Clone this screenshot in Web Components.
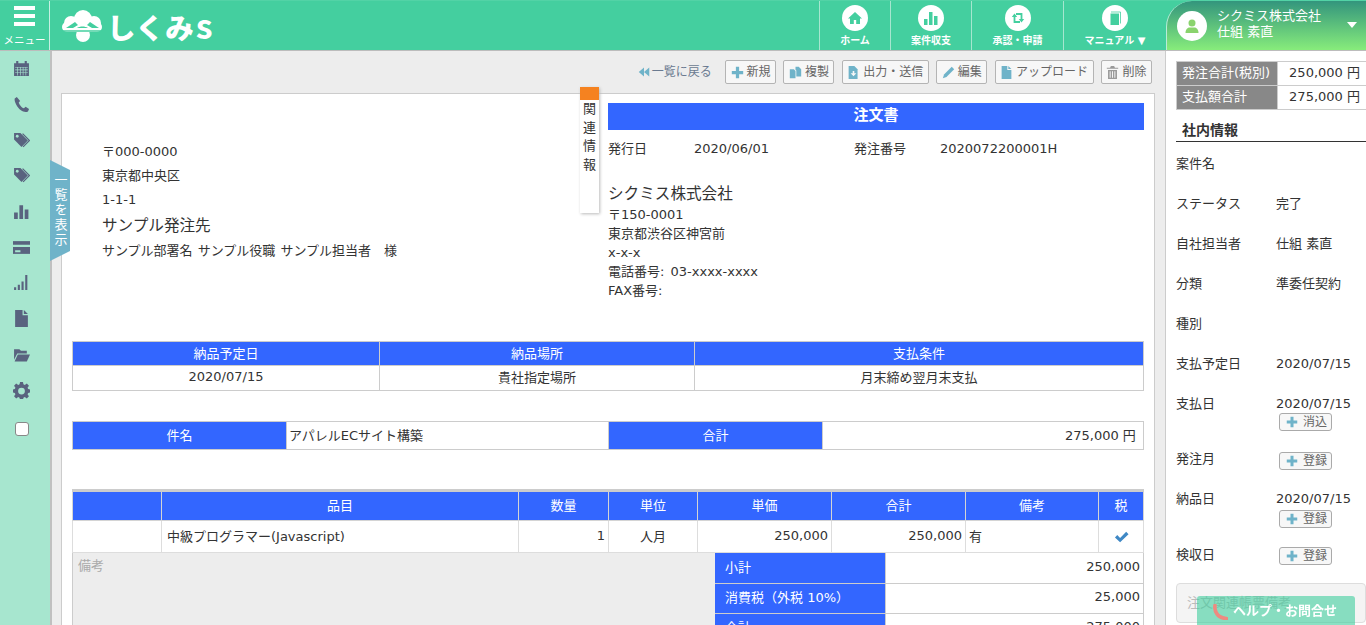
<!DOCTYPE html>
<html lang="ja">
<head>
<meta charset="utf-8">
<title>しくみs</title>
<style>
html, body { margin: 0; height: 100%; overflow: hidden; }
body { font: 13px "DejaVu Sans", "Noto Sans CJK JP", sans-serif; color: #333; }
</style>
</head>
<body>
<app-shell>
  <app-header slot="header"></app-header>
  <side-bar slot="side"></side-bar>
  <main-area slot="main"></main-area>
  <info-panel slot="info"></info-panel>
</app-shell>
<list-tab></list-tab>
<help-button></help-button>

<script>
// fill="currentColor" icons, all on a 16x16 box
const ICONS = {
    calendar: '<path d="M1 3h2V1h2v2h6V1h2v2h2v12H1z"/><path fill="#a7e6cf" d="M2 6.500h12v.6H2zM2 9h12v.6H2zM2 11.500h12v.6H2zM4 6.500h.6v8H4zM6.600 6.500h.6v8h-.6zM9.200 6.500h.6v8h-.6zM11.800 6.500h.6v8h-.6z"/>',
    phone: '<path d="M3.600 1 1.600 2.400C.9 5 4 11 7.500 13.500c2 1.400 4.600 2 6.600 1l1-2.300-3.200-2-1.600 1.300C8 10.800 5.800 7.800 5.400 6l1.300-1.300z"/>',
    handset: '<path d="M3 1.500C2 8 6 14 14.500 14.500" fill="none" stroke="currentColor" stroke-width="3.600" stroke-linecap="round"/>',
    tags: '<path d="M1 1h6l7 7-6 6-7-7z"/><path fill="none" stroke="currentColor" stroke-width="1.200" d="M9 1.500l6.500 6.500-6 6"/><circle cx="4" cy="4" r="1.300" fill="#a7e6cf"/>',
    bars: '<path d="M1 9h3.500v6H1zM6 2h3.500v13H6zM11 6h3.500v9H11z"/>',
    card: '<path d="M0 2h16v12H0z"/><path fill="#a7e6cf" d="M0 5.500h16v2H0zM2 10.500h5v2H2z"/>',
    signal: '<path d="M1 12.500h2V15H1zM4.500 10h2v5h-2zM8 7h2v8H8zM11.500 1h2v14h-2z"/>',
    file: '<path d="M2 0h7v5h5v11H2z"/><path d="M10.200 0 14 3.800h-3.800z"/>',
    folder: '<path d="M1 3h5l1.500 1.500H13V7H4L1 13z"/><path d="M4.500 8H16l-3 6.500H1.500z"/>',
    cog: '<path fill-rule="evenodd" d="M6.600 0h2.800l.4 2.200 1.300.6L13 1.500l2 2-1.300 1.900.6 1.300 2.200.4v2.800l-2.200.4-.6 1.300 1.300 1.900-2 2-1.900-1.300-1.300.6-.4 2.200H6.600l-.4-2.200-1.300-.6L3 15.500l-2-2 1.300-1.900-.6-1.300L-.5 9.900V7.100l2.200-.4.6-1.300L1 3.500l2-2 1.900 1.300 1.300-.6z M8 5.300a3.200 3.200 0 1 0 0 6.400 3.200 3.200 0 0 0 0-6.400z"/>',
    home: '<path d="M8 2 1 8.500h2V14h3.800v-4h2.400v4H13V8.500h2z"/>',
    retweet: '<path d="M4.500 5.500V12H10M11.500 10.500V4H6" fill="none" stroke="currentColor" stroke-width="1.800"/><path d="M1.800 7 4.500 3.500 7.200 7zM8.800 9l2.700 3.500L14.200 9z"/>',
    book: '<path d="M3.500 3.500h8.500V15H3.500z"/><path d="M4 2h9.500v11.500" fill="none" stroke="currentColor" stroke-width=".8"/>',
    user: '<circle cx="8" cy="5" r="3.500"/><path d="M1.500 15c0-4 2.500-5.500 4-5.500h5c1.500 0 4 1.500 4 5.500z"/>',
    plus: '<path d="M6 1h4v5h5v4h-5v5H6v-5H1V6h5z"/>',
    copy: '<path d="M1 4h5l2 2v9H1z"/><path d="M8 1h4l3 3v9H9V5.500L8 4.500z"/>',
    output: '<path d="M2 0h7l4 4v12H2z"/><path fill="#f7f7f7" d="M7 6h2v3h2.500L8 12.500 4.500 9H7z"/>',
    pencil: '<path d="M12 1l3 3-9.500 9.500-4.500 1.500 1.500-4.500z"/>',
    trash: '<path fill-rule="evenodd" d="M6 0h4l1 2h4v1.500H1V2h4zM2.500 5h11v11h-11zM4.500 6.500v8h1.200v-8zM7.400 6.500v8h1.200v-8zM10.300 6.500v8h1.200v-8z"/>',
    back: '<path d="M8 2v12L1 8zM15 2v12L8 8z"/>',
    check: '<path d="M1 9l2.500-2.500 3 3L13 3l2.500 2.500-9 8.500z"/>'
};

function icon(name, size) {
    return `<svg width="${size}" height="${size}" viewBox="0 0 16 16" fill="currentColor" aria-hidden="true">${ICONS[name]}</svg>`;
}

class AppShell extends HTMLElement {
    constructor() {
        super();
        this.attachShadow({mode: 'open'});
        this.shadowRoot.innerHTML = `<style>
        :host { display: grid; grid-template: 51px 574px / 52px 1fr 201px; height: 625px; width: 1366px; overflow: hidden; }
        .top { grid-column: 1 / 4; display: block; }
        </style>
        <div class="top"><slot name="header"></slot></div>
        <slot name="side"></slot>
        <slot name="main"></slot>
        <slot name="info"></slot>`;
    }
}

class NavItem extends HTMLElement {
    constructor() {
        super();
        this.attachShadow({mode: 'open'});
        this.shadowRoot.innerHTML = `<style>
        :host { display: flex; flex-direction: column; align-items: center; box-sizing: border-box; border-left: 1px solid #a6e6cf; padding-top: 4px; color: #fff; font-size: 10px; font-weight: bold; }
        .circle { width: 26px; height: 26px; border-radius: 50%; background: #fff; color: #44cf9f; display: flex; align-items: center; justify-content: center; }
        .label { margin-top: 2px; line-height: 15px; white-space: nowrap; }
        </style>
        <div class="circle">${icon(this.getAttribute('icon'), 16)}</div>
        <div class="label"><slot></slot></div>`;
        this.style.width = this.getAttribute('w') + 'px';
    }
}

class AppHeader extends HTMLElement {
    constructor() {
        super();
        this.attachShadow({mode: 'open'});
        this.shadowRoot.innerHTML = `<style>
        :host { display: flex; height: 51px; box-sizing: border-box; background: #44cf9f; border-top: 1px solid #52d3a6; border-bottom: 1px solid #bcbcbc; color: #fff; }
        .menu { width: 49px; border-right: 1px solid #c6f0e2; display: flex; flex-direction: column; align-items: center; box-sizing: content-box; }
        .burger { margin-top: 5px; width: 21px; height: 20px; background: linear-gradient(#fff 0 4px, transparent 4px 8px, #fff 8px 12px, transparent 12px 16px, #fff 16px 20px); }
        .menu span { font-size: 10.500px; line-height: 12px; margin-top: 8px; white-space: nowrap; }
        .logo { display: flex; align-items: center; margin-left: 12px; flex: 1; }
        .word { display: flex; align-items: baseline; font: 900 28.500px/48px "Noto Sans CJK JP", sans-serif; margin-left: 5px; white-space: nowrap; }
        .word b { font-size: 34px; font-weight: 700; line-height: 48px; margin-left: 2px; }
        nav { display: flex; }
        .user { width: 200px; box-sizing: border-box; border-left: 1px solid #b9ecd8; border-radius: 26px 0 0 0; background: linear-gradient(#33957d, #87ec7b); display: flex; align-items: center; position: relative; }
        .avatar { width: 30px; height: 30px; margin-left: 10px; border-radius: 50%; background: #fff; color: #8ad36d; display: flex; align-items: center; justify-content: center; }
        .name { margin-left: 10px; font-size: 13px; line-height: 16px; white-space: nowrap; margin-top: -3px; }
        .caret { position: absolute; right: 9px; top: 21px; width: 0; height: 0; border: 5px solid transparent; border-top: 6px solid #fff; border-bottom: 0; }
        </style>
        <div class="menu"><div class="burger"></div><span>メニュー</span></div>
        <div class="logo">
          <svg width="40" height="32" viewBox="0 0 40 32" fill="#fff" aria-hidden="true">
            <circle cx="21" cy="9" r="9"/><circle cx="9" cy="13" r="7"/><circle cx="32" cy="13" r="7"/><circle cx="21" cy="25" r="7"/><rect x="0" y="12" width="40" height="10" rx="5"/>
            <path d="M4 18l9-6 3 3-5 3zM37 18l-9-6-3 3 5 3zM15 18c3-2 8-2 11 0z" fill="#44cf9f"/>
            <path d="M0 21h40" stroke="#44cf9f" stroke-width="1.600"/>
          </svg>
          <span class="word">しくみ<b>s</b></span>
        </div>
        <nav>
          <nav-item icon="home" w="71">ホーム</nav-item>
          <nav-item icon="bars" w="81">案件収支</nav-item>
          <nav-item icon="retweet" w="92">承認・申請</nav-item>
          <nav-item icon="book" w="103">マニュアル ▼</nav-item>
        </nav>
        <div class="user">
          <div class="avatar">${icon('user', 16)}</div>
          <div class="name">シクミス株式会社<br>仕組 素直</div>
          <div class="caret"></div>
        </div>`;
    }
}

class SideBar extends HTMLElement {
    constructor() {
        super();
        this.attachShadow({mode: 'open'});
        const names = ['calendar', 'phone', 'tags', 'tags', 'bars', 'card', 'signal', 'file', 'folder', 'cog'];
        this.shadowRoot.innerHTML = `<style>
        :host { display: flex; flex-direction: column; align-items: center; box-sizing: border-box; width: 52px; padding: 0 7px 0 0; background: #a7e6cf; border-right: 2px solid #c0c0c0; color: #59637f; }
        .ic { height: 35.700px; display: flex; align-items: center; justify-content: center; flex: none; }
        .box { width: 12px; height: 12px; border: 1px solid #888; border-radius: 3px; background: #fff; margin-top: 14px; flex: none; }
        </style>
        ${names.map(n => `<div class="ic">${icon(n, 17)}</div>`).join('')}
        <div class="box"></div>`;
    }
}

class ToolButton extends HTMLElement {
    constructor() {
        super();
        this.attachShadow({mode: 'open'});
        this.shadowRoot.innerHTML = `<style>
        :host { display: inline-flex; align-items: center; justify-content: center; gap: 3px; box-sizing: border-box; height: 24px; padding-bottom: 3px; border: 1px solid #b4b4b4; border-radius: 2px; background: #f7f7f7; color: #666; font-size: 12px; white-space: nowrap; }
        .i { color: #6fb3c9; display: flex; margin-top: 3px; }
        :host([muted]) .i { color: #9a9a9a; }
        </style>
        <span class="i">${icon(this.getAttribute('icon'), 13)}</span><slot></slot>`;
        this.style.width = this.getAttribute('w') + 'px';
    }
}

class ToolBar extends HTMLElement {
    constructor() {
        super();
        this.attachShadow({mode: 'open'});
        this.shadowRoot.innerHTML = `<style>
        :host { display: flex; justify-content: flex-end; align-items: center; height: 24px; gap: 7.400px; margin-right: 3px; }
        .back { display: flex; align-items: center; gap: 2px; color: #6a7a90; font-size: 12px; margin-right: 6px; padding-bottom: 3px; white-space: nowrap; }
        .back span { color: #6fb3c9; display: flex; margin-top: 3px; }
        </style>
        <div class="back"><span>${icon('back', 12)}</span>一覧に戻る</div>
        <tool-button icon="plus" w="51">新規</tool-button>
        <tool-button icon="copy" w="51">複製</tool-button>
        <tool-button icon="output" w="87">出力・送信</tool-button>
        <tool-button icon="pencil" w="51">編集</tool-button>
        <tool-button icon="file" w="99">アップロード</tool-button>
        <tool-button icon="trash" w="51" muted>削除</tool-button>`;
    }
}

class MainArea extends HTMLElement {
    constructor() {
        super();
        this.attachShadow({mode: 'open'});
        this.shadowRoot.innerHTML = `<style>
        :host { display: block; box-sizing: border-box; background: #ededed; padding: 9px 10px 0 9px; overflow: hidden; }
        order-doc { margin-top: 9px; }
        </style>
        <tool-bar></tool-bar>
        <order-doc></order-doc>`;
    }
}

class RelatedTab extends HTMLElement {
    constructor() {
        super();
        this.attachShadow({mode: 'open'});
        this.shadowRoot.innerHTML = `<style>
        :host { display: block; position: absolute; left: 518px; top: -7px; width: 19px; height: 126px; background: #fff; box-shadow: 1px 1px 3px #bbb; text-align: center; font-size: 13px; line-height: 18.500px; }
        .flag { height: 13px; background: #f58220; }
        </style>
        <div class="flag"></div>関<br>連<br>情<br>報`;
    }
}

class OrderDoc extends HTMLElement {
    constructor() {
        super();
        this.attachShadow({mode: 'open'});
        this.shadowRoot.innerHTML = `<style>
        :host { display: block; position: relative; box-sizing: border-box; height: 620px; width: 1094px; background: #fff; border: 1px solid #ccc; padding: 9px 10px 0; }
        .head { display: flex; justify-content: space-between; }
        .to { padding: 37px 0 0 30px; line-height: 24px; word-spacing: 1px; }
        .to .big { font-size: 15.600px; line-height: 26px; padding-top: 1px; }
        .from { width: 536px; }
        .bar { height: 27px; background: #3366ff; color: #fff; font-weight: bold; font-size: 15px; line-height: 25px; text-align: center; }
        .dates { display: grid; grid-template-columns: 86px 160px 86px auto; line-height: 20px; margin-top: 9px; }
        .co { margin-top: 24px; font-size: 15.600px; line-height: 22px; }
        .addr { line-height: 19px; word-spacing: 2px; }
        table { border-collapse: collapse; table-layout: fixed; width: 1072px; }
        th { background: #3366ff; color: #fff; font-weight: normal; border: 1px solid #ccc; padding: 0 0 3px; }
        td { border: 1px solid #ccc; padding: 0 3px 3px; background: #fff; }
        .c { text-align: center; }
        .r { text-align: right; }
        .t1 { margin-top: 41px; }
        .t1 th { height: 20px; }
        .t1 td { height: 21px; text-align: center; }
        .t2 { margin-top: 30px; }
        .t2 th, .t2 td { height: 24px; }
        .t2 td:nth-child(2) { padding-left: 2px; }
        .t3 { margin-top: 39px; border-top: 3px solid #ccc; }
        .t3 th { height: 25px; border-color: #d4d4d4; }
        .t3 td { height: 28px; border-color: #ddd; }
        .t3 td:nth-child(2) { padding-left: 5px; }
        .tick { color: #3f88c5; display: inline-flex; vertical-align: middle; margin-top: 3px; }
        .sum { display: flex; align-items: flex-start; }
        .note { width: 643px; box-sizing: border-box; background: #ededed; border-left: 1px solid #ccc; color: #aaa; padding: 2px 5px; height: 120px; flex: none; }
        .sum table { width: 429px; flex: none; }
        .sum th { width: 170px; height: 30px; text-align: left; padding-left: 10px; box-sizing: border-box; border-top: 0; border-left: 0; }
        .sum td { padding-right: 3px; text-align: right; border-top: 0; }
        </style>
        <related-tab></related-tab>
        <div class="head">
          <div class="to">
            〒000-0000<br>東京都中央区<br>1-1-1
            <div class="big">サンプル発注先</div>
            サンプル部署名 サンプル役職 サンプル担当者　様
          </div>
          <div class="from">
            <div class="bar">注文書</div>
            <div class="dates"><span>発行日</span><span>2020/06/01</span><span>発注番号</span><span>2020072200001H</span></div>
            <div class="co">シクミス株式会社</div>
            <div class="addr">〒150-0001<br>東京都渋谷区神宮前<br>x-x-x<br>電話番号: 03-xxxx-xxxx<br>FAX番号:</div>
          </div>
        </div>
        <table class="t1">
          <colgroup><col style="width:307px"><col style="width:315px"><col></colgroup>
          <tr><th>納品予定日</th><th>納品場所</th><th>支払条件</th></tr>
          <tr><td>2020/07/15</td><td>貴社指定場所</td><td>月末締め翌月末支払</td></tr>
        </table>
        <table class="t2">
          <colgroup><col style="width:214px"><col style="width:322px"><col style="width:214px"><col></colgroup>
          <tr><th>件名</th><td>アパレルECサイト構築</td><th>合計</th><td class="r">275,000 円&nbsp;</td></tr>
        </table>
        <table class="t3">
          <colgroup><col style="width:89px"><col style="width:357px"><col style="width:90px"><col style="width:89px"><col style="width:134px"><col style="width:134px"><col style="width:133px"><col></colgroup>
          <tr><th></th><th>品目</th><th>数量</th><th>単位</th><th>単価</th><th>合計</th><th>備考</th><th>税</th></tr>
          <tr><td></td><td>中級プログラマー(Javascript)</td><td class="r">1</td><td class="c">人月</td><td class="r">250,000</td><td class="r">250,000</td><td>有</td><td class="c"><span class="tick">${icon('check', 15)}</span></td></tr>
        </table>
        <div class="sum">
          <div class="note">備考</div>
          <table>
            <tr><th>小計</th><td>250,000</td></tr>
            <tr><th>消費税（外税 10%）</th><td>25,000</td></tr>
            <tr><th>合計</th><td>275,000</td></tr>
          </table>
        </div>`;
    }
}

class InfoRow extends HTMLElement {
    constructor() {
        super();
        this.attachShadow({mode: 'open'});
        this.shadowRoot.innerHTML = `<style>
        :host { display: grid; grid-template-columns: 100px 1fr; line-height: 20px; white-space: nowrap; }
        .val { display: flex; flex-direction: column; align-items: flex-start; }
        </style>
        <div>${this.getAttribute('label')}</div>
        <div class="val"><slot></slot></div>`;
        this.style.height = (this.getAttribute('h') || 40) + 'px';
    }
}

class MiniButton extends HTMLElement {
    constructor() {
        super();
        this.attachShadow({mode: 'open'});
        this.shadowRoot.innerHTML = `<style>
        :host { display: flex; align-items: center; gap: 5px; box-sizing: border-box; width: 53px; height: 18px; padding-left: 6px; margin-left: 3px; border: 1px solid #aaa; border-radius: 3px; background: #f7f7f7; color: #666; font-size: 12px; line-height: 15px; }
        span { color: #6fb3c9; display: flex; }
        </style>
        <span>${icon('plus', 12)}</span><slot></slot>`;
        this.style.marginTop = (this.getAttribute('top') || 0) + 'px';
    }
}

class InfoPanel extends HTMLElement {
    constructor() {
        super();
        this.attachShadow({mode: 'open'});
        this.shadowRoot.innerHTML = `<style>
        :host { display: block; box-sizing: border-box; background: #fff; border-left: 1px solid #ccc; padding: 10px 0 0 10px; overflow: hidden; }
        .totals { display: grid; grid-template-columns: 100px 1fr; gap: 1px; background: #ccc; border: 1px solid #ccc; border-right: 0; }
        .totals div { height: 23px; line-height: 21px; white-space: nowrap; }
        .k { background: #888; color: #fff; padding-left: 5px; }
        .v { background: #fff; text-align: right; padding-right: 6px; }
        h2 { margin: 10px 0 12px; height: 21px; padding-left: 6px; border-bottom: 1px solid #333; font-size: 14px; line-height: 20px; }
        .memo { margin-top: 9px; height: 40px; box-sizing: border-box; border: 1px solid #ddd; border-radius: 4px; background: #f4f4f4; color: #bbb; padding: 9px 10px; line-height: 20px; white-space: nowrap; }
        </style>
        <div class="totals">
          <div class="k">発注合計(税別)</div><div class="v">250,000 円</div>
          <div class="k">支払額合計</div><div class="v">275,000 円</div>
        </div>
        <h2>社内情報</h2>
        <div>
          <info-row label="案件名"></info-row>
          <info-row label="ステータス">完了</info-row>
          <info-row label="自社担当者">仕組 素直</info-row>
          <info-row label="分類">準委任契約</info-row>
          <info-row label="種別"></info-row>
          <info-row label="支払予定日">2020/07/15</info-row>
          <info-row label="支払日" h="55">2020/07/15<mini-button top="-1">消込</mini-button></info-row>
          <info-row label="発注月" h="40"><mini-button top="3">登録</mini-button></info-row>
          <info-row label="納品日" h="56">2020/07/15<mini-button top="1">登録</mini-button></info-row>
          <info-row label="検収日" h="29"><mini-button top="2">登録</mini-button></info-row>
        </div>
        <div class="memo">注文関連帳票備考</div>`;
    }
}

class ListTab extends HTMLElement {
    constructor() {
        super();
        this.attachShadow({mode: 'open'});
        this.shadowRoot.innerHTML = `<style>
        :host { position: fixed; left: 50px; top: 160px; width: 20px; height: 101px; background: #6fb3c9; clip-path: polygon(0 0, 100% 10px, 100% 91px, 0 100%); color: #fff; font-size: 13px; display: flex; align-items: center; justify-content: center; }
        div { writing-mode: vertical-rl; letter-spacing: 2px; white-space: nowrap; }
        </style>
        <div>一覧を表示</div>`;
    }
}

class HelpButton extends HTMLElement {
    constructor() {
        super();
        this.attachShadow({mode: 'open'});
        this.shadowRoot.innerHTML = `<style>
        :host { position: fixed; left: 1197px; top: 596px; width: 158px; height: 29px; background: rgba(68, 207, 159, .62); border-radius: 3px 3px 0 0; color: #fff; font-size: 13px; font-weight: bold; display: flex; align-items: center; gap: 5px; padding: 0 0 2px 15px; box-sizing: border-box; white-space: nowrap; }
        span { color: #ee8a80; display: flex; margin-top: 4px; }
        </style>
        <span>${icon('handset', 16)}</span>ヘルプ・お問合せ`;
    }
}

customElements.define('nav-item', NavItem);
customElements.define('app-header', AppHeader);
customElements.define('side-bar', SideBar);
customElements.define('tool-button', ToolButton);
customElements.define('tool-bar', ToolBar);
customElements.define('related-tab', RelatedTab);
customElements.define('order-doc', OrderDoc);
customElements.define('main-area', MainArea);
customElements.define('info-row', InfoRow);
customElements.define('mini-button', MiniButton);
customElements.define('info-panel', InfoPanel);
customElements.define('list-tab', ListTab);
customElements.define('help-button', HelpButton);
customElements.define('app-shell', AppShell);
</script>
</body>
</html>
